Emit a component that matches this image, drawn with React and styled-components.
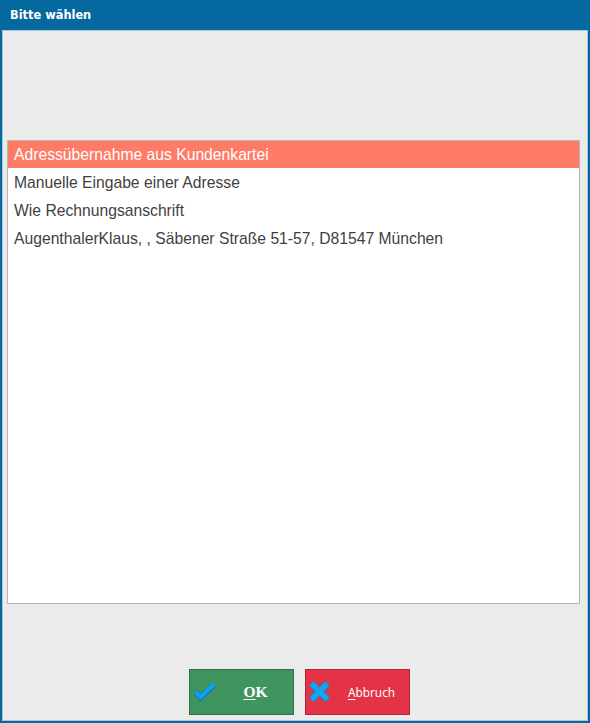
import React from 'react'
import styled, { createGlobalStyle } from 'styled-components'

const GlobalStyle = createGlobalStyle`
  html, body {
    margin: 0;
    padding: 0;
    background: #05689f;
  }
`

const Window = styled.div`
  width: 590px;
  height: 723px;
  box-sizing: border-box;
  display: flex;
  flex-direction: column;
  background: #05689f;
  padding: 0 2px 2px;
  font-family: "Liberation Sans", sans-serif;
`

const TitleBar = styled.div`
  height: 30px;
  flex-shrink: 0;
  display: flex;
  align-items: center;
  padding-left: 8px;
  color: #fff;
  font-family: "DejaVu Sans", sans-serif;
  font-size: 11.4px;
  font-weight: 700;
`

const Body = styled.div`
  flex: 1;
  display: flex;
  flex-direction: column;
  min-height: 0;
  background: #ebebeb;
  border: 1px solid #a9c6d8;
  padding: 109px 7px 5px 4px;
`

const List = styled.ul`
  height: 464px;
  box-sizing: border-box;
  margin: 0;
  padding: 0;
  list-style: none;
  background: #fff;
  border: 1px solid #b4b4b4;
`

const Item = styled.li`
  height: ${props => props.selected ? '27px' : '28px'};
  margin-bottom: ${props => props.selected ? '1px' : '0'};
  display: flex;
  align-items: center;
  padding-left: 6px;
  font-size: 15.7px;
  color: ${props => props.selected ? '#fff' : '#3f3f3f'};
  background: ${props => props.selected ? '#ff7b66' : 'transparent'};
`

const Footer = styled.div`
  flex: 1;
  display: flex;
  justify-content: center;
  align-items: flex-end;
  gap: 11px;
  padding-left: 12px;
`

const Button = styled.button`
  width: 105px;
  height: 46px;
  box-sizing: border-box;
  padding: 0 0 0 2px;
  display: flex;
  align-items: center;
  color: #fff;
  background: ${props => props.bg};
  border: 1px solid ${props => props.edge};
`

const Label = styled.span`
  flex: 1;
  text-align: center;
  font-family: ${props => props.strong ? '"Liberation Serif", serif' : '"Noto Sans", sans-serif'};
  font-size: ${props => props.strong ? '15.5px' : '11.8px'};
  font-weight: ${props => props.strong ? 700 : 400};
  u {
    text-underline-offset: 2px;
  }
`

const CheckIcon = () => (
  <svg width='26' height='26' viewBox='0 0 26 26'>
    <path d='M3.5 13 L8.5 18.5 L22 5.5' fill='none' stroke='#0b7fbf' strokeWidth='6' />
    <path d='M3.5 13 L8.5 18 L22 5' fill='none' stroke='#12a0e8' strokeWidth='4' />
  </svg>
)

const CrossIcon = () => (
  <svg width='26' height='26' viewBox='0 0 26 26'>
    <path d='M3.5 4.5 L19.5 20.5 M19.5 4.5 L3.5 20.5' fill='none' stroke='#0b7fbf' strokeWidth='7' />
    <path d='M3.5 4.5 L19.5 20.5 M19.5 4.5 L3.5 20.5' fill='none' stroke='#12a6ee' strokeWidth='5.5' />
  </svg>
)

const items = [
  'Adressübernahme aus Kundenkartei',
  'Manuelle Eingabe einer Adresse',
  'Wie Rechnungsanschrift',
  'AugenthalerKlaus, , Säbener Straße 51-57, D81547 München'
]

const App = () => (
  <Window>
    <GlobalStyle />
    <TitleBar>Bitte wählen</TitleBar>
    <Body>
      <List>
        {items.map((item, i) =>
          <Item key={item} selected={i === 0}>{item}</Item>
        )}
      </List>
      <Footer>
        <Button bg='#409460' edge='#2f6f49'>
          <CheckIcon />
          <Label strong><u>O</u>K</Label>
        </Button>
        <Button bg='#e43346' edge='#b02535'>
          <CrossIcon />
          <Label><u>A</u>bbruch</Label>
        </Button>
      </Footer>
    </Body>
  </Window>
)

export default App
